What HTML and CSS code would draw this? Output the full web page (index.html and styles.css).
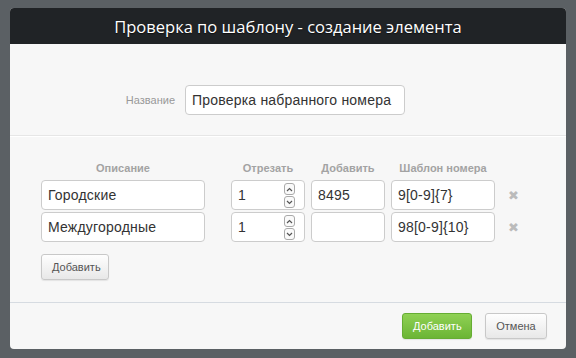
FILE: index.html
```html
<!DOCTYPE html>
<html lang="ru">
<head>
    <meta charset="UTF-8">
    <title>Проверка по шаблону</title>
    <link rel="stylesheet" href="styles.css">
</head>
<body>
    <div class="modal">
        <div class="modal-header">Проверка по шаблону - создание элемента</div>

        <div class="name-row">
            <label class="name-label">Название</label>
            <div class="input name-input">Проверка набранного номера</div>
        </div>

        <div class="rules">
            <div class="rules-grid">
                <div class="th">Описание</div>
                <div class="th th-cut">Отрезать</div>
                <div class="th">Добавить</div>
                <div class="th">Шаблон номера</div>
                <div></div>

                <div class="input">Городские</div>
                <div class="input spin">1
                    <span class="spin-btns">
                        <span class="spin-btn"><svg width="7" height="5" viewBox="0 0 7 5"><path d="M1 4 L3.5 1.5 L6 4" fill="none" stroke="#555" stroke-width="1.2"/></svg></span>
                        <span class="spin-btn"><svg width="7" height="5" viewBox="0 0 7 5"><path d="M1 1 L3.5 3.5 L6 1" fill="none" stroke="#555" stroke-width="1.2"/></svg></span>
                    </span>
                </div>
                <div class="input">8495</div>
                <div class="input">9[0-9]{7}</div>
                <div class="remove">&#10006;</div>

                <div class="input">Междугородные</div>
                <div class="input spin">1
                    <span class="spin-btns">
                        <span class="spin-btn"><svg width="7" height="5" viewBox="0 0 7 5"><path d="M1 4 L3.5 1.5 L6 4" fill="none" stroke="#555" stroke-width="1.2"/></svg></span>
                        <span class="spin-btn"><svg width="7" height="5" viewBox="0 0 7 5"><path d="M1 1 L3.5 3.5 L6 1" fill="none" stroke="#555" stroke-width="1.2"/></svg></span>
                    </span>
                </div>
                <div class="input"></div>
                <div class="input">98[0-9]{10}</div>
                <div class="remove">&#10006;</div>
            </div>
            <button class="btn btn-small">Добавить</button>
        </div>

        <div class="modal-footer">
            <button class="btn btn-green">Добавить</button>
            <button class="btn btn-cancel">Отмена</button>
        </div>
    </div>
</body>
</html>
```

FILE: styles.css
```css
* { margin: 0; padding: 0; box-sizing: border-box; }
body { background: #5b6064; padding: 8px 10px; font-family: "Liberation Sans", Arial, sans-serif; }
.modal { width: 556px; background: #f7f7f7; border-radius: 4px; overflow: hidden; }
.modal-header { height: 36px; background: #202326; color: #fff; font-family: "Open Sans", sans-serif; font-size: 16.5px; line-height: 37px; text-align: center; text-shadow: 0 1px 1px rgba(0,0,0,0.6); }
.name-row { display: flex; align-items: center; padding: 41px 0 20px; border-bottom: 1px solid #e6e6e6; box-shadow: 0 1px 0 #fff; }
.name-label { width: 165px; margin-right: 10px; text-align: right; font-size: 11px; color: #999; }
.input { height: 30px; background: #fff; border: 1px solid #ccc; border-radius: 4px; padding: 0 6px; font-size: 14px; letter-spacing: 0.2px; line-height: 28px; color: #333; }
.name-input { width: 220px; }
.rules { padding: 26px 0 22px 31px; border-bottom: 1px solid #d6dbe1; }
.rules-grid { display: grid; grid-template-columns: 164px 94px 74px 104px 24px; column-gap: 6px; row-gap: 2px; align-items: center; }
.rules-grid > :nth-child(5n+2) { margin-left: 20px; width: 74px; }
.th { font-size: 11px; font-weight: bold; color: #a3a3a3; text-align: center; padding-bottom: 4px; }
.spin { position: relative; }
.spin-btns { position: absolute; right: 9px; top: 2px; display: flex; flex-direction: column; gap: 1px; }
.spin-btn { width: 11px; height: 12px; border: 1px solid #aaa; border-radius: 3px; background: #fafafa; display: flex; align-items: center; justify-content: center; }
.remove { color: #bbb; font-size: 13px; text-align: center; }
.btn { height: 26px; padding: 0 10px; border: 1px solid #c8c8c8; border-radius: 3px; background: linear-gradient(#fefefe, #e8e8e8); font-family: "Liberation Sans", Arial, sans-serif; font-size: 11px; color: #555; box-shadow: 0 1px 1px rgba(0,0,0,0.08); }
.btn-small { margin-top: 12px; width: 68px; }
.modal-footer { display: flex; justify-content: flex-end; gap: 13px; padding: 10px 19px 10px; }
.btn-green { width: 70px; background: linear-gradient(#8fd154, #6bb535); border-color: #66ad33; color: #fff; }
.btn-cancel { width: 62px; }
```
